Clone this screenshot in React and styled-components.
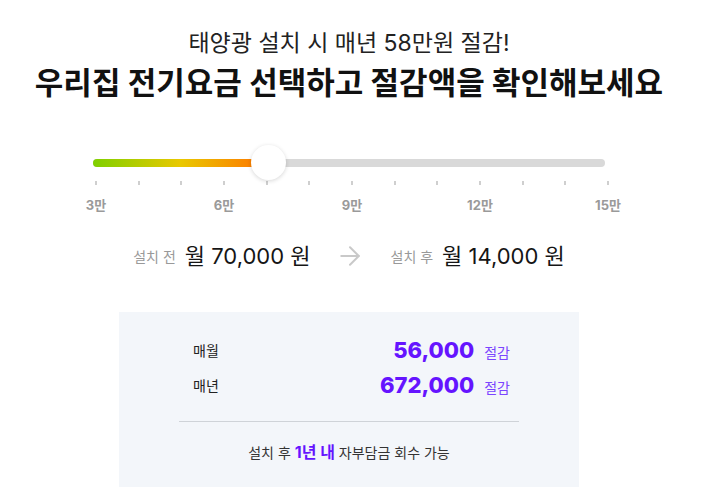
import React from "react"
import styled, { createGlobalStyle } from "styled-components"
import { ArrowRight } from "lucide-react"

const GlobalStyle = createGlobalStyle`
body {
  margin: 0;
  background: #fff;
  font-family: Inter, "Noto Sans CJK KR", sans-serif;
  color: #111;
}
`

const Page = styled.div`
width: 698px;
height: 502px;
overflow: hidden;
padding-top: 28px;
box-sizing: border-box;
`
const SubTitle = styled.p`
margin: 0;
text-align: center;
font-size: 23px;
line-height: 30px;
color: #222;
`
const Title = styled.h1`
margin: 6px 0 0;
text-align: center;
font-size: 31px;
line-height: 38px;
font-weight: 700;
color: #111;
`

const Slider = styled.div`
margin: 43px 0 0 93px;
width: 512px;
height: 35px;
display: flex;
align-items: center;
position: relative;
`
const Track = styled.div`
width: 100%;
height: 8px;
border-radius: 4px;
background: #d9d9d9;
display: flex;
`
const Fill = styled.div`
height: 100%;
border-radius: 4px;
background: linear-gradient(90deg, #7fd000 0%, #e9c800 50%, #ff7200 100%);
`
const Thumb = styled.div`
position: absolute;
top: 0;
width: 35px;
height: 35px;
margin-left: -17px;
border-radius: 50%;
background: #fff;
box-shadow: 0 1px 4px rgba(0, 0, 0, 0.16);
`
const Ticks = styled.div`
margin: 1px 0 0 95px;
width: 514px;
display: flex;
justify-content: space-between;
`
const Tick = styled.span`
width: 2px;
height: 4px;
background: #cfcfcf;
`
const Labels = styled.div`
margin: 11px 0 0 76px;
width: 552px;
display: flex;
justify-content: space-between;
`
const Label = styled.span`
width: 40px;
text-align: center;
font-size: 13px;
line-height: 18px;
font-weight: 700;
color: #9a9a9a;
`

const Compare = styled.div`
margin-top: 27px;
display: flex;
align-items: center;
justify-content: center;
`
const Side = styled.div`
display: flex;
align-items: center;
gap: 9px;
`
const SideLabel = styled.span`
font-size: 14px;
color: #999;
`
const SideValue = styled.span`
font-size: 22px;
line-height: 30px;
color: #151515;
`
const Arrow = styled(ArrowRight)`
margin: 0 26px 0 24px;
color: #c9c9c9;
`

const Card = styled.div`
margin: 41px 0 0 119px;
width: 460px;
height: 175px;
box-sizing: border-box;
background: #f3f6fa;
padding-top: 20px;
`
const Row = styled.div`
margin-left: 74px;
width: 317px;
height: 35px;
display: flex;
align-items: center;
justify-content: space-between;
`
const RowLabel = styled.span`
font-size: 14px;
color: #222;
`
const Amount = styled.div`
display: flex;
align-items: baseline;
gap: 10px;
`
const Number = styled.span`
font-size: 22px;
font-weight: 800;
color: #6514ff;
`
const Unit = styled.span`
font-size: 14px;
color: #7b45ff;
`
const Divider = styled.hr`
margin: 19px auto 0;
width: 340px;
border: 0;
border-top: 1px solid #cfd3d8;
`
const Note = styled.p`
margin: 19px 0 0;
text-align: center;
font-size: 14px;
line-height: 22px;
color: #333;
`
const Strong = styled.b`
font-size: 16px;
font-weight: 700;
color: #6514ff;
`

const ticks = Array.from({ length: 13 })
const labels = ["3만", "6만", "9만", "12만", "15만"]
const value = 175

const App = () => {
  return (
    <Page>
      <GlobalStyle />
      <SubTitle>태양광 설치 시 매년 58만원 절감!</SubTitle>
      <Title>우리집 전기요금 선택하고 절감액을 확인해보세요</Title>
      <Slider>
        <Track>
          <Fill style={{ width: value }} />
        </Track>
        <Thumb style={{ left: value }} />
      </Slider>
      <Ticks>
        {ticks.map((_, i) => <Tick key={i} />)}
      </Ticks>
      <Labels>
        {labels.map(l => <Label key={l}>{l}</Label>)}
      </Labels>
      <Compare>
        <Side>
          <SideLabel>설치 전</SideLabel>
          <SideValue>월 70,000 원</SideValue>
        </Side>
        <Arrow size={30} strokeWidth={1.6} />
        <Side>
          <SideLabel>설치 후</SideLabel>
          <SideValue>월 14,000 원</SideValue>
        </Side>
      </Compare>
      <Card>
        <Row>
          <RowLabel>매월</RowLabel>
          <Amount><Number>56,000</Number><Unit>절감</Unit></Amount>
        </Row>
        <Row>
          <RowLabel>매년</RowLabel>
          <Amount><Number>672,000</Number><Unit>절감</Unit></Amount>
        </Row>
        <Divider />
        <Note>설치 후 <Strong>1년 내</Strong> 자부담금 회수 가능</Note>
      </Card>
    </Page>
  )
}

export default App
